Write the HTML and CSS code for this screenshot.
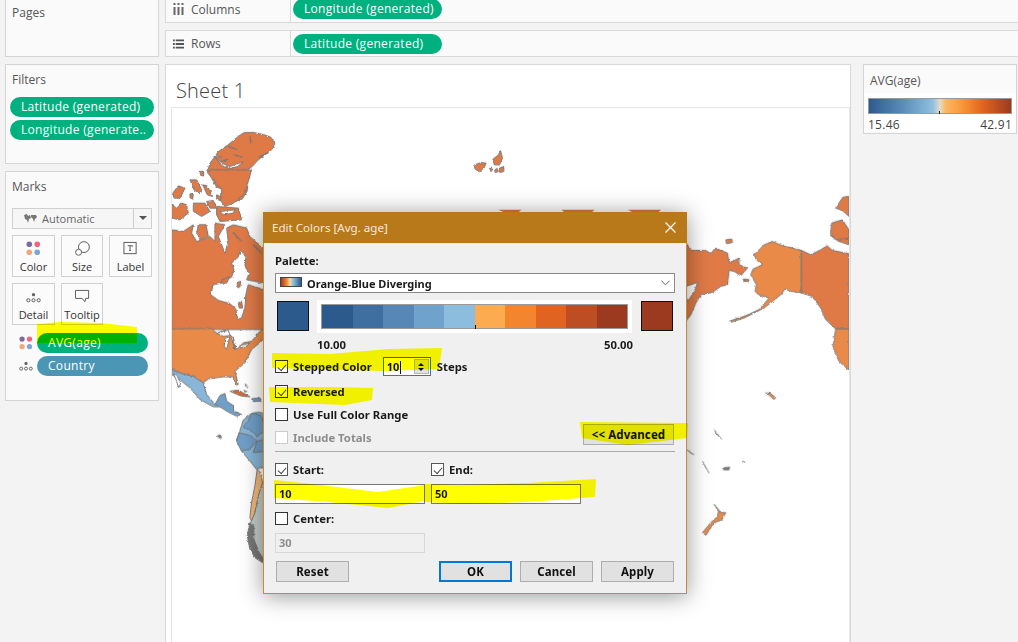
FILE: index.html
```html
<!DOCTYPE html>
<html lang="en">
<head>
<meta charset="utf-8">
<title>Edit Colors</title>
<link rel="stylesheet" href="styles.css">
</head>
<body>
<div class="app">
  <aside class="side">
    <section class="panel pages"><h2 class="panel-title">Pages</h2></section>
    <section class="panel filters">
      <h2 class="panel-title">Filters</h2>
      <div class="pill green">Latitude (generated)</div>
      <div class="pill green">Longitude (generate..</div>
    </section>
    <section class="panel marks">
      <h2 class="panel-title">Marks</h2>
      <div class="mark-select">
        <span class="mark-select-label">
          <svg class="icon-map" viewBox="0 0 14 10"><path d="M1 1l3-1 1 2 2-1 1 3-2 1-1 4-1-3-2-1zM8 1l5 0 1 2-2 2-1 3-1-3-2-2z" fill="#777"/></svg>
          Automatic
        </span>
        <span class="mark-select-arrow"></span>
      </div>
      <div class="mark-cards">
        <div class="mark-card">
          <svg class="mark-icon" viewBox="0 0 16 16"><circle cx="3.5" cy="3.5" r="3" fill="#7b6a9c"/><circle cx="12" cy="3.5" r="3" fill="#f0637a"/><circle cx="3.5" cy="12" r="3" fill="#f0a77a"/><circle cx="12" cy="12" r="3" fill="#7ea4d4"/></svg>
          <span>Color</span>
        </div>
        <div class="mark-card">
          <svg class="mark-icon" viewBox="0 0 16 16"><circle cx="9.5" cy="6.5" r="5.8" fill="none" stroke="#555"/><circle cx="3.8" cy="12" r="3.2" fill="#fff" stroke="#555"/></svg>
          <span>Size</span>
        </div>
        <div class="mark-card">
          <svg class="mark-icon" viewBox="0 0 16 16"><rect x="1" y="1.500" width="13" height="12" fill="none" stroke="#555"/><path d="M5 5h5v1M7.500 5v5M6.500 10h2" fill="none" stroke="#555"/></svg>
          <span>Label</span>
        </div>
        <div class="mark-card">
          <svg class="mark-icon" viewBox="0 0 16 16"><circle cx="8" cy="6" r="1.800" fill="#666"/><circle cx="2.500" cy="12" r="1.700" fill="none" stroke="#555"/><circle cx="8" cy="12" r="1.700" fill="none" stroke="#555"/><circle cx="13.500" cy="12" r="1.700" fill="none" stroke="#555"/></svg>
          <span>Detail</span>
        </div>
        <div class="mark-card">
          <svg class="mark-icon" viewBox="0 0 16 16"><path d="M.5 1.500h14v8.500h-3l-1 3.500-3-3.500H.5z" fill="none" stroke="#555"/></svg>
          <span>Tooltip</span>
        </div>
      </div>
      <div class="mark-row">
        <svg class="row-icon" viewBox="0 0 16 16"><circle cx="3.500" cy="3.500" r="3" fill="#7b6a9c"/><circle cx="12" cy="3.500" r="3" fill="#f0637a"/><circle cx="3.500" cy="12" r="3" fill="#f0a77a"/><circle cx="12" cy="12" r="3" fill="#7ea4d4"/></svg>
        <div class="pill green wide">AVG(age)</div>
      </div>
      <div class="mark-row">
        <svg class="row-icon" viewBox="0 0 16 16"><circle cx="8" cy="5" r="1.800" fill="#666"/><circle cx="2.500" cy="11" r="1.700" fill="none" stroke="#555"/><circle cx="8" cy="11" r="1.700" fill="none" stroke="#555"/><circle cx="13.500" cy="11" r="1.700" fill="none" stroke="#555"/></svg>
        <div class="pill teal wide">Country</div>
      </div>
    </section>
  </aside>

  <main class="main">
    <div class="shelf columns">
      <div class="shelf-label">
        <svg class="shelf-icon" viewBox="0 0 11 12"><path d="M1.500 0v2M5.500 0v2M9.500 0v2M1.500 4v8M5.500 4v8M9.500 4v8" stroke="#666" stroke-width="2"/></svg>
        Columns
      </div>
      <div class="pill green shelf-pill">Longitude (generated)</div>
    </div>
    <div class="shelf rows">
      <div class="shelf-label">
        <svg class="shelf-icon" viewBox="0 0 12 10"><path d="M0 1h2M3 1h9M0 5h2M3 5h9M0 9h2M3 9h9" stroke="#555" stroke-width="2"/></svg>
        Rows
      </div>
      <div class="pill green shelf-pill">Latitude (generated)</div>
    </div>

    <div class="content">
      <section class="sheet">
        <h1 class="sheet-title">Sheet 1</h1>
        <div class="view">
          <svg class="map" viewBox="172 109 678 533">
            <defs>
              <filter id="rough" filterUnits="userSpaceOnUse" x="172" y="109" width="678" height="533">
                <feTurbulence type="fractalNoise" baseFrequency=".3" numOctaves="2" seed="4" result="n"/>
                <feDisplacementMap in="SourceGraphic" in2="n" scale="2.500" xChannelSelector="R" yChannelSelector="G"/>
              </filter>
            </defs>
            <g filter="url(#rough)">
            <g class="land" transform="translate(165 100) scale(.3333)">
              <path class="can" d="M330 130L318 112 296 104 268 98 238 98 222 108 205 122 188 136 160 155 153 165 170 172 150 170 135 190 128 215 140 235 155 262 180 270 178 290 195 295 210 305 232 298 248 272 240 250 255 232 240 215 262 200 280 180 300 165 322 148z"/>
              <path class="cut" d="M150 172L172 198 195 206 218 200 235 186 215 192 195 200 175 192z"/>
              <path class="fjord" d="M165 185L190 178M205 165L232 172M188 230L205 255M228 255L248 240M282 172L310 158M190 140L215 148M255 110L258 130"/>
              <path class="can" d="M105 215L116 215 116 228 108 228z"/>
              <path class="can" d="M928 196L950 188 965 190 958 205 945 215 932 208z"/>
              <path class="can" d="M985 178L1002 165 1008 152 1014 175 1005 195 990 195z"/>
              <path class="can" d="M975 205L985 208 980 215zM990 210L998 206 1002 215 992 218zM1005 205L1018 200 1018 215 1006 218z"/>
            </g>
            <g class="land" transform="translate(170 170) scale(.3333)">
              <path class="can" d="M112 8L125 0 245 0 235 35 225 70 205 90 190 100 165 110 150 90 155 60 135 35z"/>
              <path class="can" d="M60 30L80 30 95 60 90 72 72 60z"/>
              <path class="can" d="M98 45L112 48 128 80 112 75z"/>
              <path class="can" d="M8 70L25 48 45 55 30 85 12 85z"/>
              <path class="can" d="M60 72L70 74 68 88 60 84zM140 75L155 82 150 92 140 88z"/>
              <path class="can" d="M5 105L20 115 35 100 50 105 55 130 30 150 5 145z"/>
              <path class="can" d="M70 100L105 100 120 125 95 140 70 125z"/>
              <path class="can" d="M110 95L130 92 140 115 120 115z"/>
              <path class="can" d="M140 110L205 115 215 150 150 155 140 135z"/>
              <path class="cut" d="M150 125L195 120 190 130 160 135z"/>
              <path class="can" d="M85 165L108 165 115 200 90 210 80 190z"/>
            </g>
            <g class="land" transform="translate(0 170) scale(.3333)">
              <path class="can" d="M515 180L550 185 580 165 575 190 590 215 620 205 630 200 645 215 645 160 675 165 655 200 675 250 685 215 680 175 700 165 740 175 750 200 795 240 860 300 860 480 785 480 515 480z"/>
              <path class="cut" d="M632 375L640 345 665 340 695 322 702 300 695 280 715 262 722 240 738 262 735 290 748 310 740 330 790 340 850 360 850 370 790 360 745 345 738 375 735 415 725 445 712 450 708 418 690 402 655 392z"/>
              <path class="can" d="M665 330L690 322 680 340 665 340zM715 400L725 395 728 415 718 415zM712 340L722 335 720 352 712 350z"/>
              <path class="fjord" d="M700 190L725 215M760 225L785 250"/>
            </g>
            <g class="land" transform="translate(170 300) scale(.3333)">
              <path class="us" d="M5 88L125 87 140 100 165 92 180 105 190 115 200 150 220 130 245 125 270 95 285 85 285 110 275 125 245 150 225 190 195 215 205 255 198 256 190 232 160 232 115 238 100 250 70 230 35 222 5 208z"/>
              <path class="cut" d="M140 100L175 92 180 108 160 110zM165 115L180 112 170 150 163 140zM185 115L195 150 190 112zM210 138L240 130 232 138 212 146z"/>
              <path class="mex" d="M5 212L35 222 70 230 100 250 110 285 135 315 165 300 172 318 150 322 130 322 90 300 60 265 35 245 5 225z"/>
              <path class="cut" d="M10 222L20 226 32 252 26 265 18 240z"/>
              <path class="mex-dark" d="M135 315L150 288 165 282 170 305 190 318 192 335 215 345 200 350 175 338 150 322z"/>
              <path class="or" d="M180 275L205 272 240 292 215 290 195 282z"/>
              <path class="mex-dark" d="M245 298L270 295 275 305 250 306z"/>
              <path class="speck" d="M225 255L235 262 228 262zM222 272L232 276 224 278z"/>
            </g>
            <g class="land" transform="translate(200 390) scale(.3333)">
              <path class="mex" d="M130 92L155 72 175 68 195 72 200 110 260 130 260 240 180 235 170 240 150 215 125 185 110 150 118 130z"/>
              <path class="mex-dark" d="M118 130L150 138 172 155 150 178 125 185 110 155zM155 72L185 78 190 100 195 125 172 140 155 125 130 112 145 95z"/>
              <path class="mex-dark" d="M172 155L200 150 200 185 160 190z"/>
              <path class="grey" d="M188 280L240 280 240 520 190 520 175 490 158 440 152 400 165 370 175 320z"/>
              <path class="peach" d="M172 240L182 250 188 280 175 320 165 370 155 395 150 385 155 340 165 290z"/>
              <path class="dark" d="M150 400L162 410 162 450 178 490 190 508 188 520 165 505 150 480 142 440z"/>
              <path class="speck" d="M52 138L62 136 65 146 55 146z"/>
            </g>
            <g class="land" transform="translate(680 230) scale(.3333)">
              <path class="can" d="M20 40L38 62 80 62 95 72 108 55 145 70 150 100 180 85 180 105 205 115 185 138 165 125 150 122 145 165 125 170 100 188 65 195 50 220 35 255 20 275z"/>
              <path class="cut" d="M20 170L55 158 50 175 30 210 20 212z"/>
              <path class="us" d="M225 75L255 45 280 35 310 48 367 62 367 190 335 185 318 178 305 195 280 215 255 235 225 250 195 265 155 278 152 274 200 258 240 240 270 205 238 195 228 185 232 165 215 135 222 118 250 105 232 90z"/>
              <path class="can" d="M367 62L395 75 425 60 445 48 460 62 510 72 510 298 470 298 440 270 425 235 400 200 367 190z"/>
              <path class="us" d="M470 298L510 298 510 422 480 395 462 352z"/>
              <path class="can" d="M140 30L158 28 160 38 142 42zM455 18L470 0 510 0 510 45 480 35z"/>
              <path class="can" d="M192 148L210 150 208 156 194 154z"/>
              <path class="us" d="M105 825L125 850 140 850 128 872 105 880 80 918 70 910 95 880 115 862 118 845z"/>
              <path class="us" d="M260 490L275 492 290 505 284 510 272 498z"/>
              <path class="speck" d="M22 660L45 676 35 672zM70 695L90 732 78 712zM130 715L152 712 150 722 134 722z"/>
              <path class="speck" d="M105 600L128 630 110 612zM190 695L198 698 192 700z"/>
            </g>
            <g class="land" transform="translate(680 60) scale(.3333)">
              <path class="can" d="M470 445L492 412 510 410 510 470 490 452zM458 490L490 480 510 510 510 535 470 540 455 520z"/>
            </g>
            </g>
            <g class="stubs" transform="translate(262 210) scale(.3333)">
              <path d="M710 0L780 0 770 8 730 8zM900 0L1000 0 990 8 910 8zM1100 0L1200 0 1190 8 1115 8z"/>
            </g>
          </svg>
        </div>
      </section>

      <section class="legend">
        <h2 class="legend-title">AVG(age)</h2>
        <div class="legend-body">
          <div class="legend-bar"><i class="legend-tick"></i></div>
          <div class="legend-values"><span>15.46</span><span>42.91</span></div>
        </div>
      </section>
    </div>
  </main>
</div>

<div class="dialog">
  <header class="dialog-head">
    <span>Edit Colors [Avg. age]</span>
    <svg class="dialog-close" viewBox="0 0 11 11"><path d="M.5.5l10 10M10.500.5l-10 10" stroke="#fff" stroke-width="1.200" fill="none"/></svg>
  </header>
  <div class="dialog-body">
    <div class="d-label palette-label">Palette:</div>
    <div class="palette-select">
      <i class="palette-swatch"></i>
      <span>Orange-Blue Diverging</span>
      <svg class="chev" viewBox="0 0 10 6"><path d="M.5.5L5 5 9.500.5" fill="none" stroke="#555"/></svg>
    </div>
    <div class="ramp-row">
      <i class="end-swatch low"></i>
      <div class="ramp-wrap">
        <div class="ramp">
          <i class="s1"></i><i class="s2"></i><i class="s3"></i><i class="s4"></i><i class="s5"></i><i class="s6"></i><i class="s7"></i><i class="s8"></i><i class="s9"></i><i class="s10"></i>
          <b class="ramp-tick"></b>
        </div>
      </div>
      <i class="end-swatch high"></i>
    </div>
    <div class="ramp-values d-label"><span>10.00</span><span>50.00</span></div>
    <div class="check-row stepped">
      <i class="check on"></i><span class="d-label">Stepped Color</span>
      <div class="spinner"><span class="spinner-value">10</span><span class="spinner-btns"><i class="up"></i><i class="down"></i></span></div>
      <span class="d-label steps">Steps</span>
    </div>
    <div class="check-row reversed"><i class="check on"></i><span class="d-label">Reversed</span></div>
    <div class="check-row full"><i class="check"></i><span class="d-label">Use Full Color Range</span></div>
    <div class="check-row totals">
      <i class="check off"></i><span class="d-label muted">Include Totals</span>
      <button class="btn advanced">&lt;&lt; Advanced</button>
    </div>
    <hr class="sep">
    <div class="range-grid">
      <div class="check-row"><i class="check on grey"></i><span class="d-label">Start:</span></div>
      <div class="check-row"><i class="check on grey"></i><span class="d-label">End:</span></div>
      <div class="field">10</div>
      <div class="field">50</div>
      <div class="check-row"><i class="check"></i><span class="d-label">Center:</span></div>
      <div></div>
      <div class="field disabled">30</div>
    </div>
    <div class="btn-row">
      <button class="btn reset">Reset</button>
      <button class="btn primary">OK</button>
      <button class="btn">Cancel</button>
      <button class="btn">Apply</button>
    </div>
  </div>
</div>

<svg class="marker" viewBox="0 0 1018 642">
  <path d="M37 324L60 322 100 323 137 327 137 343 37 343z"/>
  <path d="M272 353L330 354 389 349 442 348 439 369 382 371 272 368z"/>
  <path d="M269 387L330 387 373 388 372 400 345 405 270 402z"/>
  <path d="M580 422L688 423 687 438 628 445 582 438z"/>
  <path d="M274 480L312 484 378 492 425 485 425 501 388 508 328 502 274 498z"/>
  <path d="M425 484L462 485 528 483 596 479 595 497 528 502 462 504 425 502z"/>
</svg>
</body>
</html>
```
FILE: styles.css
```css
* { box-sizing: border-box; }
html, body { margin: 0; height: 642px; overflow: hidden; }
body {
  background: #f3f3f3;
  color: #4d4d4d;
  font-family: "Open Sans", "Noto Sans", sans-serif;
  font-size: 12px;
  position: relative;
}
.app {
  display: flex;
  gap: 6px;
  padding-left: 5px;
  margin-top: -1px;
  height: 643px;
}
.side { width: 154px; flex: none; display: flex; flex-direction: column; gap: 7px; }
.panel {
  background: #fafafa;
  border: 1.500px solid #d4d4d4;
  padding: 6px 5px 0;
}
.panel-title {
  margin: 0;
  font-size: 12px;
  font-weight: 400;
  color: #555;
  line-height: 16px;
  padding-left: 1px;
}
.pages { height: 58px; padding-top: 5px; }
.filters { height: 100px; padding-top: 7px; }
.filters .panel-title { margin-bottom: 9px; }
.filters .pill { margin: 0 -1px 3px -1px; }
.marks { height: 230px; padding-top: 7px; padding-left: 6px; padding-right: 6px; }
.marks .panel-title { padding-left: 0; }

.pill {
  height: 20px;
  border-radius: 10px;
  color: #fff;
  font-size: 12px;
  line-height: 19px;
  padding-left: 11px;
  white-space: nowrap;
  letter-spacing: .3px;
  overflow: hidden;
}
.green { background: #00b180; }
.teal { background: #4a96b4; }

.mark-select {
  margin-top: 13px;
  height: 21px;
  border: 1px solid #cfcfcf;
  background: #f6f6f6;
  display: flex;
  color: #666;
  font-size: 11px;
  line-height: 19px;
}
.mark-select-label { flex: 1; display: flex; align-items: center; gap: 5px; padding-left: 10px; }
.icon-map { width: 14px; height: 10px; }
.mark-select-arrow { width: 18px; border-left: 1px solid #cfcfcf; position: relative; }
.mark-select-arrow::after {
  content: "";
  position: absolute;
  left: 5px;
  top: 7px;
  border: 4px solid transparent;
  border-top: 4px solid #555;
}
.mark-cards {
  display: grid;
  grid-template-columns: 43px 42px 43px;
  grid-auto-rows: 42px;
  gap: 6px;
  margin-top: 6px;
}
.mark-card {
  border: 1px solid #cfcfcf;
  background: #fbfbfb;
  display: flex;
  flex-direction: column;
  align-items: center;
  font-size: 11px;
  color: #333;
  line-height: 14px;
  padding-top: 5px;
}
.mark-icon { width: 15px; height: 15px; margin-bottom: 4px; }
.mark-row { display: flex; align-items: center; height: 20px; margin-top: 3px; gap: 4px; margin-left: 7px; }
.mark-cards + .mark-row { margin-top: 8px; }
.row-icon { width: 14px; height: 14px; flex: none; }
.wide { width: 111px; }

.main { flex: 1; min-width: 0; display: flex; flex-direction: column; }
.shelf {
  background: #fafafa;
  border: 1px solid #d9d9d9;
  border-right: 0;
  display: flex;
  align-items: center;
}
.columns { height: 28px; margin-top: -4px; margin-bottom: 7px; }
.rows { height: 27px; margin-bottom: 7px; }
.shelf-label {
  width: 125px;
  height: 100%;
  border-right: 1px solid #d9d9d9;
  display: flex;
  align-items: center;
  gap: 7px;
  padding-left: 7px;
  color: #555;
}
.shelf-icon { width: 11px; height: 12px; flex: none; }
.shelf-pill { width: 149px; margin-left: 2px; padding-left: 11px; }

.content { flex: 1; display: flex; gap: 12px; min-height: 0; }
.sheet {
  width: 686px;
  flex: none;
  background: #fff;
  border: 1.500px solid #d9d9d9;
  border-bottom: 0;
  display: flex;
  flex-direction: column;
  padding: 0 0 0 5px;
}
.sheet-title {
  margin: 0;
  height: 42px;
  padding: 10px 0 0 5px;
  font-size: 20px;
  font-weight: 300;
  line-height: 32px;
  color: #444;
  letter-spacing: .2px;
}
.view { flex: 1; border: 1px solid #e6e6e6; border-bottom: 0; }
.map { display: block; width: 100%; height: 100%; }
.land path { fill: #df7a47; stroke: #777; stroke-width: 3; stroke-linejoin: round; }
.land .us { fill: #ea8a48; }
.land .or { fill: #d26a35; }
.land .mex { fill: #88b5d8; }
.land .mex-dark { fill: #6f9fc9; }
.land .peach { fill: #f4ba78; }
.land .grey { fill: #c3cdca; stroke: #8b9795; }
.land .dark { fill: #777; }
.land .speck { fill: #777; stroke-width: 1.500; }
.land .cut { fill: #fff; }
.land .fjord { fill: none; stroke-width: 4; }
.stubs path { fill: #df7a47; }

.legend {
  width: 154px;
  height: 70px;
  flex: none;
  border: 1.500px solid #d4d4d4;
  background: #fafafa;
}
.legend-title { margin: 0; height: 28px; padding: 7px 6px 0; font-size: 12px; font-weight: 400; line-height: 18px; color: #555; }
.legend-body { background: #fff; height: 39px; padding: 5px 4px 0; }
.legend-bar {
  height: 16px;
  border: 1px solid #999;
  position: relative;
  background: linear-gradient(to right, #2c5a8c 0, #5d8fbd 25%, #8fc0df 45%, #e5dccb 50%, #fdb860 54%, #f58f32 68%, #e0651f 80%, #9c3a20 100%);
}
.legend-tick { position: absolute; left: 70px; bottom: -1px; width: 1px; height: 3px; background: #222; }
.legend-values { display: flex; justify-content: space-between; font-size: 12px; color: #444; line-height: 15px; margin-top: 3px; letter-spacing: .25px; }

.dialog {
  position: absolute;
  left: 263px;
  top: 212px;
  width: 424px;
  height: 382px;
  background: #f0f0f0;
  border: 1px solid #c58a34;
  border-top: 0;
  box-shadow: 0 2px 22px rgba(0, 0, 0, .42);
  color: #1a1a1a;
}
.dialog-head {
  height: 31px;
  margin: 0 -1px;
  background: #b8791b;
  color: #f5ead8;
  font-family: "Noto Sans", sans-serif;
  font-size: 11.600px;
  display: flex;
  align-items: center;
  justify-content: space-between;
  padding: 0 11px 0 9px;
}
.dialog-close { width: 11px; height: 11px; }
.dialog-body {
  padding: 0 11px;
  font-family: "Noto Sans", sans-serif;
  font-size: 11px;
}
.d-label { font-weight: 700; font-size: 11.300px; line-height: 15px; white-space: nowrap; }
.muted { color: #8d8d8d; }
.palette-label { padding-top: 10px; height: 30px; }
.palette-select {
  width: 400px;
  height: 20px;
  background: #fff;
  border: 1px solid #8a8a8a;
  display: flex;
  align-items: center;
  font-weight: 700;
  padding: 0 4px;
  gap: 5px;
}
.palette-select span { flex: 1; }
.palette-swatch {
  width: 22px;
  height: 10px;
  border: 1px solid #444;
  margin-top: -2px;
  background: linear-gradient(to right, #9c3a20, #f58f32 30%, #fdd9a0 45%, #8fc0df 60%, #2c5a8c);
}
.chev { width: 9px; height: 6px; }
.ramp-row { display: flex; align-items: center; height: 34px; margin-top: 6px; padding-left: 2px; }
.end-swatch { width: 32px; height: 30px; border: 1px solid #111; flex: none; }
.low { background: #2c5a8c; }
.high { background: #9c3a20; }
.ramp-wrap { width: 315px; height: 33px; background: #fff; margin: 0 9px 0 8px; padding: 4px; flex: none; }
.ramp { display: flex; height: 25px; border: 1px solid #9a9a9a; position: relative; }
.ramp i { flex: 1; }
.s1 { background: #2c5a8c; }
.s2 { background: #3f6fa0; }
.s3 { background: #5687b7; }
.s4 { background: #6fa2cc; }
.s5 { background: #8cbcde; }
.s6 { background: #fdab50; }
.s7 { background: #f4852f; }
.s8 { background: #e06322; }
.s9 { background: #bd4e24; }
.s10 { background: #9c3a20; }
.ramp-tick { position: absolute; left: 153px; bottom: -1px; width: 1px; height: 4px; background: #111; }
.ramp-values { display: flex; justify-content: space-between; width: 316px; margin-left: 42px; margin-top: 4px; height: 15px; }
.check-row { display: flex; align-items: center; gap: 5px; height: 15px; }
.stepped { margin-top: 4px; height: 21px; }
.reversed { margin-top: 7px; }
.full { margin-top: 8px; }
.totals { margin-top: 8px; position: relative; }
.check {
  width: 13px;
  height: 13px;
  border: 1px solid #333;
  background: #fff;
  flex: none;
  position: relative;
  display: block;
}
.check.off { border-color: #ccc; }
.check.on::after {
  content: "";
  position: absolute;
  left: 2px;
  top: 1px;
  width: 7px;
  height: 4px;
  transform: translateY(2px) rotate(-50deg);
  transform-origin: center;
  border-left: 1px solid #444;
  border-bottom: 1px solid #444;
}
.check.grey { border-color: #555; }
.spinner {
  width: 48px;
  height: 19px;
  border: 1px solid #2f7ab0;
  background: #fff;
  display: flex;
  margin-left: 6px;
  color: #111;
}
.spinner-value { flex: 1; padding-left: 3px; line-height: 17px; font-size: 11px; font-weight: 700; }
.spinner-value::after { content: ""; display: inline-block; width: 1px; height: 13px; background: #111; vertical-align: -3px; margin-left: 1px; }
.spinner-btns { width: 15px; margin: 1px; border: 1px solid #b5b5b5; background: #e2e2e2; display: flex; flex-direction: column; align-items: center; justify-content: center; gap: 2px; }
.spinner-btns .up { border: 3px solid transparent; border-top: 0; border-bottom: 3px solid #111; }
.spinner-btns .down { border: 3px solid transparent; border-bottom: 0; border-top: 3px solid #111; }
.steps { margin-left: 1px; }
.btn {
  height: 21px;
  width: 73px;
  padding: 0;
  border: 1px solid #adadad;
  background: #e1e1e1;
  color: #111;
  font-family: "Noto Sans", sans-serif;
  font-size: 11.500px;
  letter-spacing: .1px;
  font-weight: 700;
}
.advanced { position: absolute; left: 308px; top: -6px; width: 91px; }
.sep { border: 0; border-top: 1px solid #aaa; width: 400px; margin: 6px 0 0; height: 0; }
.range-grid {
  display: grid;
  grid-template-columns: 150px 150px;
  column-gap: 6px;
  margin-top: 10px;
  width: 306px;
}
.range-grid .check-row { height: 15px; }
.field {
  height: 20px;
  border: 1px solid #777;
  background: #fff;
  font-weight: 700;
  padding-left: 3px;
  line-height: 18px;
  margin-top: 7px;
  margin-bottom: 7px;
}
.field.disabled { border: 1px solid #d8d8d8; background: #f0f0f0; color: #8d8d8d; margin-top: 7px; margin-bottom: 0; }
.btn-row { display: flex; gap: 8px; padding-left: 1px; margin-top: 8px; }
.reset { margin-right: 82px; }
.primary { border: 2px solid #0078d7; }

.marker {
  position: absolute;
  left: 0;
  top: 0;
  width: 1018px;
  height: 642px;
  mix-blend-mode: multiply;
  pointer-events: none;
}
.marker path { fill: #ffff00; }
```
